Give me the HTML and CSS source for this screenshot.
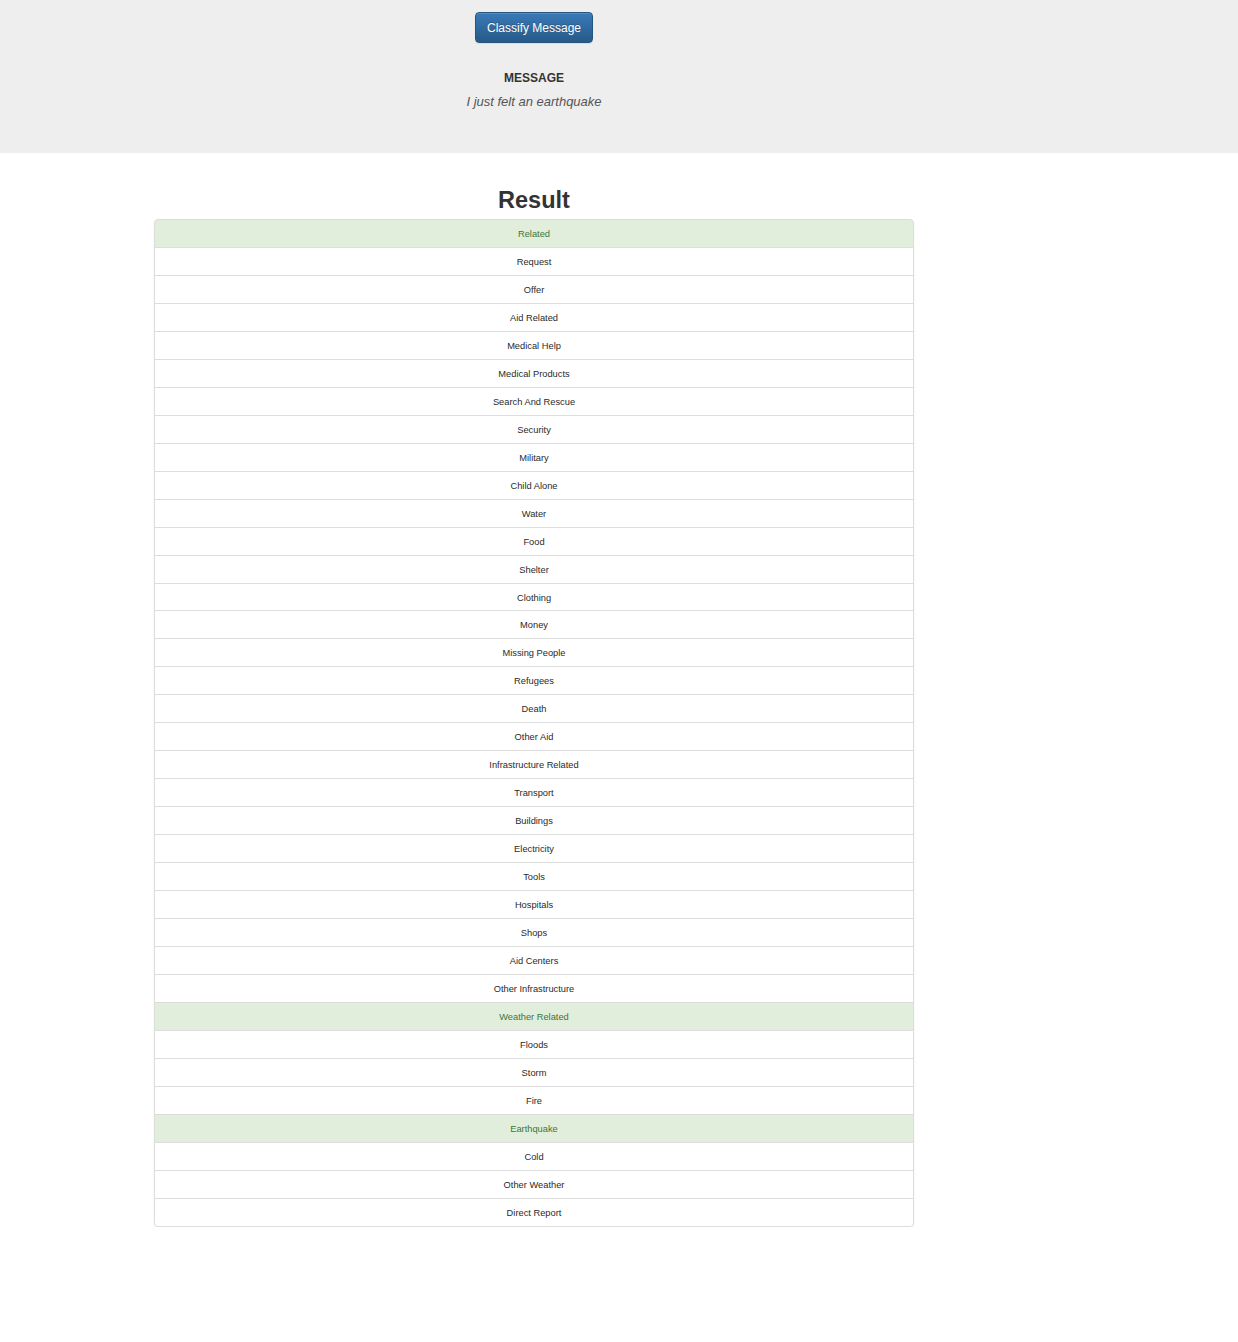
FILE: index.html
```html
<!DOCTYPE html>
<html>
<head>
<meta charset="utf-8">
<title>Disaster Response</title>
<link rel="stylesheet" href="styles.css">
</head>
<body>
<header class="jumbotron">
  <div class="col">
    <button class="btn-primary" type="button">Classify Message</button>
    <h4 class="msg-label">MESSAGE</h4>
    <p class="msg-text">I just felt an earthquake</p>
  </div>
</header>
<main class="col">
  <h1 class="result-title">Result</h1>
  <ul class="list-group">
    <li class="item success">Related</li>
    <li class="item">Request</li>
    <li class="item">Offer</li>
    <li class="item">Aid Related</li>
    <li class="item">Medical Help</li>
    <li class="item">Medical Products</li>
    <li class="item">Search And Rescue</li>
    <li class="item">Security</li>
    <li class="item">Military</li>
    <li class="item">Child Alone</li>
    <li class="item">Water</li>
    <li class="item">Food</li>
    <li class="item">Shelter</li>
    <li class="item short">Clothing</li>
    <li class="item">Money</li>
    <li class="item">Missing People</li>
    <li class="item">Refugees</li>
    <li class="item">Death</li>
    <li class="item">Other Aid</li>
    <li class="item">Infrastructure Related</li>
    <li class="item">Transport</li>
    <li class="item">Buildings</li>
    <li class="item">Electricity</li>
    <li class="item">Tools</li>
    <li class="item">Hospitals</li>
    <li class="item">Shops</li>
    <li class="item">Aid Centers</li>
    <li class="item">Other Infrastructure</li>
    <li class="item success">Weather Related</li>
    <li class="item">Floods</li>
    <li class="item">Storm</li>
    <li class="item">Fire</li>
    <li class="item success">Earthquake</li>
    <li class="item">Cold</li>
    <li class="item">Other Weather</li>
    <li class="item">Direct Report</li>
  </ul>
</main>
</body>
</html>
```
FILE: styles.css
```css
html, body {
  margin: 0;
  padding: 0;
  background: #fff;
  color: #333;
  font-family: "Liberation Sans", Arial, Helvetica, sans-serif;
}

.col {
  width: 760px;
  margin-left: 154px;
  text-align: center;
}

.jumbotron {
  background: #eeeeee;
  height: 153px;
  padding-top: 12px;
  box-sizing: border-box;
}

.btn-primary {
  display: inline-block;
  box-sizing: border-box;
  height: 31px;
  width: 118px;
  padding: 1px 6px 0;
  border: 1px solid #245580;
  border-radius: 4px;
  background: linear-gradient(to bottom, #3a7ab8 0%, #265a88 100%);
  color: #fff;
  font-family: "Liberation Sans", Arial, sans-serif;
  font-size: 12px;
  line-height: 28px;
  text-shadow: 0 -1px 0 rgba(0, 0, 0, 0.2);
  box-shadow: inset 0 1px 0 rgba(255, 255, 255, 0.15), 0 1px 1px rgba(0, 0, 0, 0.075);
  cursor: pointer;
}

.msg-label {
  margin: 27px 0 0;
  font-size: 12px;
  line-height: 16px;
  font-weight: bold;
  color: #333;
}

.msg-text {
  margin: 7px 0 0;
  font-size: 13px;
  line-height: 18px;
  font-style: italic;
  font-weight: 300;
  color: #555;
}

.result-title {
  margin: 33px 0 0;
  font-size: 23.5px;
  line-height: 28px;
  font-weight: bold;
  color: #333;
}

.list-group {
  list-style: none;
  margin: 5px 0 0;
  padding: 0;
  border-radius: 4px;
  box-shadow: 0 1px 2px rgba(0, 0, 0, 0.075);
}

.item {
  display: block;
  border: 1px solid #dddddd;
  margin-bottom: -1px;
  padding: 6px 15px 4px;
  line-height: 17px;
  font-size: 9.3px;
  color: #2a2a2a;
  background: #fff;
}

.item.short {
  padding-bottom: 3px;
}

.item:first-child {
  border-top-left-radius: 4px;
  border-top-right-radius: 4px;
}

.item:last-child {
  margin-bottom: 0;
  border-bottom-left-radius: 4px;
  border-bottom-right-radius: 4px;
}

.item.success {
  background: #e0eedb;
  color: #3c763d;
}
```
